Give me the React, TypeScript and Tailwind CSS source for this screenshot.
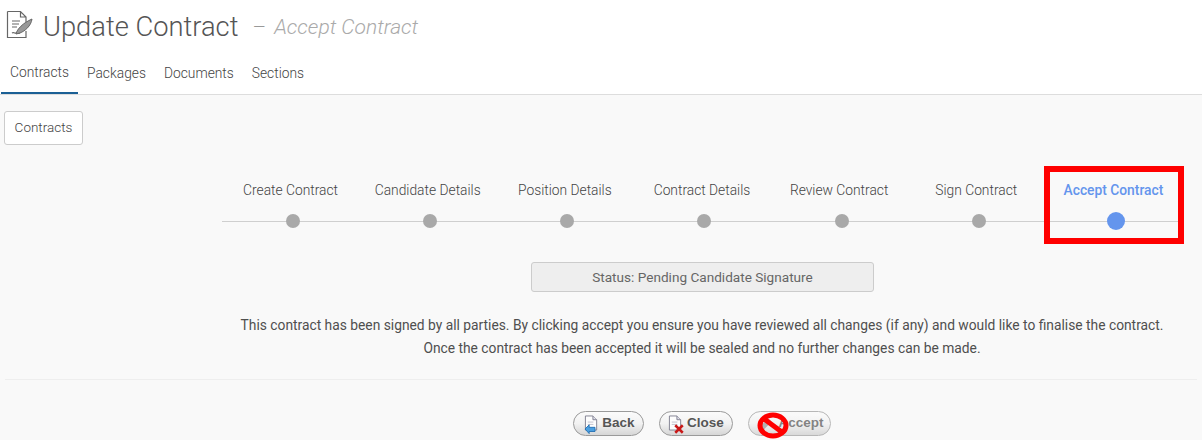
const steps = ["Create Contract", "Candidate Details", "Position Details", "Contract Details", "Review Contract", "Sign Contract", "Accept Contract"];
const tabs = ["Contracts", "Packages", "Documents", "Sections"];

function DocIcon({ className = "" }: { className?: string }) {
  return (
    <svg viewBox="0 0 16 18" className={className}>
      <path d="M1.500 1.500h8l4 4v11h-12z" fill="#fdfdfd" stroke="#7f7f90" strokeWidth="1" />
      <path d="M9.500 1.500v4h4" fill="#e0e0ea" stroke="#7f7f90" strokeWidth="1" />
      <path d="M4 8h6M4 10.500h6" stroke="#c0c0cc" strokeWidth="1" />
    </svg>
  );
}

function PillButton({ label, icon, className, textClass = "text-[#555]" }: { label: string; icon: React.ReactNode; className: string; textClass?: string }) {
  return (
    <button className={`flex h-[25px] items-center justify-center rounded-full border border-[#9a9a9a] bg-gradient-to-b from-[#fbfbfb] via-[#f2f2f2] to-[#d6d6d6] font-['Liberation_Sans',sans-serif] text-[13.500px] font-bold ${textClass} ${className}`}>
      {icon}
      {label}
    </button>
  );
}

export default function App() {
  return (
    <div className="relative h-[440px] w-[1202px] overflow-hidden bg-[#f9f9f9] font-['Roboto',sans-serif] text-[#555]">
      <header className="h-[95px] border-b border-[#dddddd] bg-white">
        <div className="flex h-[55px] items-center pl-[6px]">
          <svg viewBox="0 0 28 29" className="mt-[-6px] h-[29px] w-[28px] text-[#666]" fill="none" stroke="currentColor" strokeWidth="1.200">
            <path d="M1.500 1.500h13l5.500 5.500v5M14.500 1.500v5.500h5.500M20 21v6.500H1.500V1.500" />
            <path d="M6 11h8M6 14h7M6 17h5M6 23c2-1.500 2 1 4 0s2 .5 4 0" />
            <path d="M10 24c1-5 7-11 16-15-1 7-7 12-12 14z" fill="#999" stroke="#666" strokeWidth="1" />
          </svg>
          <h1 className="ml-[9px] text-[27.300px] font-light leading-none text-[#555]">Update Contract</h1>
          <span className="ml-[14px] text-[21px] font-light leading-none text-[#999]">–</span>
          <span className="ml-[8px] text-[21px] font-light italic leading-none text-[#aaaaaa]">Accept Contract</span>
        </div>
        <nav className="flex h-[39px] items-end pl-px text-[13.800px] font-light text-[#444]">
          {tabs.map((t, i) => (
            <div key={t} className={`flex h-[39px] items-center px-[9px] pb-[2px] ${i === 0 ? "border-b-2 border-[#1b6095]" : ""}`}>
              {t}
            </div>
          ))}
        </nav>
      </header>

      <div className="px-[4px] pt-[16px]">
        <button className="h-[34px] w-[79px] rounded-[3px] border border-[#cccccc] bg-white pb-px text-[13.500px] font-light text-[#444]">Contracts</button>
      </div>

      <div className="relative ml-[222px] mt-[35px] w-[956px]">
        <div className="absolute bottom-[8px] left-0 right-0 h-[1px] bg-[#cfcfcf]"></div>
        <div className="relative ml-[2.500px] grid w-[960px] grid-cols-7">
          {steps.map((s, i) => (
            <div key={s} className="flex flex-col items-center">
              <span className={`mr-[5px] text-[13.800px] leading-[20px] ${i === 6 ? "font-medium text-[#6495ed]" : "font-light text-[#444]"}`}>{s}</span>
              <div className="mt-[12px] flex h-[18px] items-center">
                <span className={i === 6 ? "h-[18px] w-[18px] rounded-full bg-[#6495ed]" : "h-[14px] w-[14px] rounded-full bg-[#a9a9a9]"}></span>
              </div>
            </div>
          ))}
        </div>
        <div className="absolute left-[822px] top-[-14px] h-[78px] w-[140px] border-[6px] border-[#ff0000]"></div>
      </div>

      <div className="ml-[531px] mt-[32px] flex h-[30px] w-[343px] items-center justify-center rounded-[3px] border border-[#cccccc] bg-[#eeeeee] text-[13.600px] text-[#666]">
        Status: Pending Candidate Signature
      </div>

      <div className="ml-[222px] mt-[22px] w-[960px] text-center text-[13.800px] leading-[23px] text-[#4f4f4f]">
        <p>This contract has been signed by all parties. By clicking accept you ensure you have reviewed all changes (if any) and would like to finalise the contract.</p>
        <p>Once the contract has been accepted it will be sealed and no further changes can be made.</p>
      </div>

      <div className="ml-[5px] mt-[19px] h-px w-[1192px] bg-[#eeeeee]"></div>

      <div className="mt-[31px] flex justify-start gap-[15px] pl-[573px]">
        <PillButton
          label="Back"
          className="w-[71px] gap-[2px]"
          icon={
            <span className="relative h-[20px] w-[18px]">
              <DocIcon className="absolute left-[2px] top-0 h-[18px] w-[15px]" />
              <svg viewBox="0 0 14 12" className="absolute bottom-0 left-0 h-[10px] w-[16px]">
                <path d="M1 6l5-5v3h7v5H6v2.500z" fill="#4a9fe0" stroke="#1c6ab0" strokeWidth="1" />
              </svg>
            </span>
          }
        />
        <PillButton
          label="Close"
          className="w-[74px] gap-[1px]"
          icon={
            <span className="relative h-[20px] w-[18px]">
              <DocIcon className="absolute left-0 top-0 h-[18px] w-[15px]" />
              <svg viewBox="0 0 12 12" className="absolute bottom-0 right-0 h-[10px] w-[14px]">
                <path d="M1.500 1.500l9 9M10.500 1.500l-9 9" stroke="#c81818" strokeWidth="3" />
              </svg>
            </span>
          }
        />
        <PillButton
          label="Accept"
          className="w-[83px] gap-[4px] border-[#b0b0b0] pl-[3px] opacity-90"
          textClass="text-[#777]"
          icon={
            <svg viewBox="0 0 14 14" className="h-[16px] w-[16px]">
              <path d="M2 9l7-7 3 3-7 7H2z" fill="#aaa" />
            </svg>
          }
        />
      </div>
      <svg viewBox="0 0 32 28" className="absolute left-[757px] top-[411px] h-[28px] w-[32px]" fill="none" stroke="#ff0000" strokeWidth="5">
        <ellipse cx="16" cy="14.500" rx="13" ry="10.500" />
        <path d="M6.500 7.500l19 14" />
      </svg>
    </div>
  );
}
